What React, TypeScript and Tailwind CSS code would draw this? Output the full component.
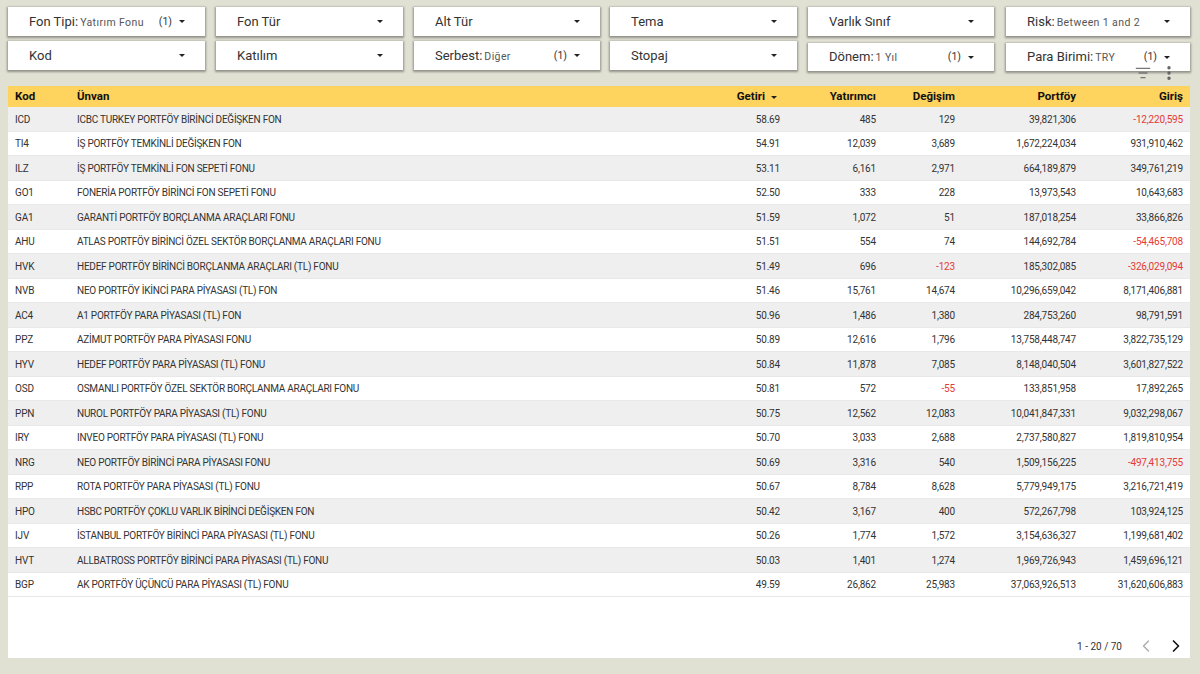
import { ListFilter, MoreVertical, ChevronLeft, ChevronRight } from 'lucide-react';

type Filter = { label: string; value?: string; count?: boolean; w: string; ml: string };

const rowOne: Filter[] = [
    { label: 'Fon Tipi', value: 'Yatırım Fonu', count: true, w: 'w-[197px]', ml: 'ml-0 h-[29px]' },
    { label: 'Fon Tür', w: 'w-[187px]', ml: 'ml-[11px] h-[29px]' },
    { label: 'Alt Tür', w: 'w-[186px]', ml: 'ml-[11px] h-[29px]' },
    { label: 'Tema', w: 'w-[187px]', ml: 'ml-[10px] h-[29px]' },
    { label: 'Varlık Sınıf', w: 'w-[186px]', ml: 'ml-[11px] h-[29px]' },
    { label: 'Risk', value: 'Between 1 and 2', w: 'w-[184px]', ml: 'ml-[12px] h-[29px]' },
];

const rowTwo: Filter[] = [
    { label: 'Kod', w: 'w-[197px]', ml: 'ml-0 h-[29px]' },
    { label: 'Katılım', w: 'w-[187px]', ml: 'ml-[11px] h-[29px]' },
    { label: 'Serbest', value: 'Diğer', count: true, w: 'w-[186px]', ml: 'ml-[11px] h-[29px]' },
    { label: 'Stopaj', w: 'w-[187px]', ml: 'ml-[10px] h-[29px]' },
    { label: 'Dönem', value: '1 Yıl', count: true, w: 'w-[186px]', ml: 'ml-[11px] mt-[2px] h-[28px]' },
    { label: 'Para Birimi', value: 'TRY', count: true, w: 'w-[184px]', ml: 'ml-[12px] mt-[2px] h-[28px]' },
];

const rows = [
    ['ICD', 'ICBC TURKEY PORTFÖY BİRİNCİ DEĞİŞKEN FON', '58.69', '485', '129', '39,821,306', '-12,220,595'],
    ['TI4', 'İŞ PORTFÖY TEMKİNLİ DEĞİŞKEN FON', '54.91', '12,039', '3,689', '1,672,224,034', '931,910,462'],
    ['ILZ', 'İŞ PORTFÖY TEMKİNLİ FON SEPETİ FONU', '53.11', '6,161', '2,971', '664,189,879', '349,761,219'],
    ['GO1', 'FONERİA PORTFÖY BİRİNCİ FON SEPETİ FONU', '52.50', '333', '228', '13,973,543', '10,643,683'],
    ['GA1', 'GARANTİ PORTFÖY BORÇLANMA ARAÇLARI FONU', '51.59', '1,072', '51', '187,018,254', '33,866,826'],
    ['AHU', 'ATLAS PORTFÖY BİRİNCİ ÖZEL SEKTÖR BORÇLANMA ARAÇLARI FONU', '51.51', '554', '74', '144,692,784', '-54,465,708'],
    ['HVK', 'HEDEF PORTFÖY BİRİNCİ BORÇLANMA ARAÇLARI (TL) FONU', '51.49', '696', '-123', '185,302,085', '-326,029,094'],
    ['NVB', 'NEO PORTFÖY İKİNCİ PARA PİYASASI (TL) FON', '51.46', '15,761', '14,674', '10,296,659,042', '8,171,406,881'],
    ['AC4', 'A1 PORTFÖY PARA PİYASASI (TL) FON', '50.96', '1,486', '1,380', '284,753,260', '98,791,591'],
    ['PPZ', 'AZİMUT PORTFÖY PARA PİYASASI FONU', '50.89', '12,616', '1,796', '13,758,448,747', '3,822,735,129'],
    ['HYV', 'HEDEF PORTFÖY PARA PİYASASI (TL) FONU', '50.84', '11,878', '7,085', '8,148,040,504', '3,601,827,522'],
    ['OSD', 'OSMANLI PORTFÖY ÖZEL SEKTÖR BORÇLANMA ARAÇLARI FONU', '50.81', '572', '-55', '133,851,958', '17,892,265'],
    ['PPN', 'NUROL PORTFÖY PARA PİYASASI (TL) FONU', '50.75', '12,562', '12,083', '10,041,847,331', '9,032,298,067'],
    ['IRY', 'INVEO PORTFÖY PARA PİYASASI (TL) FONU', '50.70', '3,033', '2,688', '2,737,580,827', '1,819,810,954'],
    ['NRG', 'NEO PORTFÖY BİRİNCİ PARA PİYASASI FONU', '50.69', '3,316', '540', '1,509,156,225', '-497,413,755'],
    ['RPP', 'ROTA PORTFÖY PARA PİYASASI (TL) FONU', '50.67', '8,784', '8,628', '5,779,949,175', '3,216,721,419'],
    ['HPO', 'HSBC PORTFÖY ÇOKLU VARLIK BİRİNCİ DEĞİŞKEN FON', '50.42', '3,167', '400', '572,267,798', '103,924,125'],
    ['IJV', 'İSTANBUL PORTFÖY BİRİNCİ PARA PİYASASI (TL) FONU', '50.26', '1,774', '1,572', '3,154,636,327', '1,199,681,402'],
    ['HVT', 'ALLBATROSS PORTFÖY BİRİNCİ PARA PİYASASI (TL) FONU', '50.03', '1,401', '1,274', '1,969,726,943', '1,459,696,121'],
    ['BGP', 'AK PORTFÖY ÜÇÜNCÜ PARA PİYASASI (TL) FONU', '49.59', '26,862', '25,983', '37,063,926,513', '31,620,606,883'],
];

const gridCols = 'grid grid-cols-[62px_623px_80px_96px_79px_121px_107px] pl-[7px]';

function Caret() {
    return <span className="h-0 w-0 border-x-[3px] border-t-[3px] border-x-transparent border-t-[#212121]" />;
}

function FilterBox({ f }: { f: Filter }) {
    return (
        <div className={`${f.w} ${f.ml} bg-white flex items-center pl-[21px] pr-[20px] shadow-[0_1px_2px_1px_rgba(0,0,0,0.35)] text-[#333]`}>
            <span className="text-[13px] whitespace-nowrap">{f.label}{f.value ? ':' : ''}</span>
            {f.value && <span className="text-[10.5px] ml-[2px] mt-[2px] text-[#555] tracking-[0.4px] whitespace-nowrap">{f.value}</span>}
            <span className="flex-1" />
            {f.count && <span className="text-[10.5px] mr-[7px]">(1)</span>}
            <Caret />
        </div>
    );
}

export default function App() {
    return (
        <div className="w-[1200px] h-[674px] bg-[#e0e0d3] overflow-hidden pt-[7px] pl-[8px] font-['Roboto',sans-serif]">
            {/* Filters */}
            <div className="flex">
                {rowOne.map((f) => <FilterBox key={f.label} f={f} />)}
            </div>
            <div className="flex mt-[5px] h-[31px] items-start">
                {rowTwo.map((f) => <FilterBox key={f.label} f={f} />)}
            </div>

            {/* Table */}
            <div className="relative mt-[14px] w-[1182px] h-[572px] bg-white flex flex-col">
                <div className="absolute right-[12px] -top-[22px] flex items-center gap-[9px] text-[#757575]">
                    <ListFilter size={16} strokeWidth={2} />
                    <MoreVertical size={18} strokeWidth={2.5} className="text-[#616161]" />
                </div>

                <div className={`${gridCols} h-[21px] pt-[1px] bg-[#fed35e] items-center text-[11.5px] font-bold text-[#111]`}>
                    <span>Kod</span>
                    <span>Ünvan</span>
                    <span className="flex items-center justify-end gap-[6px] pr-[3px]">Getiri <Caret /></span>
                    <span className="text-right">Yatırımcı</span>
                    <span className="text-right">Değişim</span>
                    <span className="text-right">Portföy</span>
                    <span className="text-right">Giriş</span>
                </div>

                {rows.map((r, i) => (
                    <div
                        key={r[0]}
                        className={`${gridCols} h-[24.5px] pt-[1px] items-center text-[10px] tracking-[-0.18px] text-[#333] border-b border-[#e8e8e8] ${i % 2 === 0 ? 'bg-[#efefef]' : 'bg-white'}`}
                    >
                        <span>{r[0]}</span>
                        <span className="whitespace-nowrap tracking-[-0.25px]">{r[1]}</span>
                        <span className="text-right">{r[2]}</span>
                        <span className="text-right">{r[3]}</span>
                        <span className={`text-right ${r[4].startsWith('-') ? 'text-[#e53935]' : ''}`}>{r[4]}</span>
                        <span className="text-right">{r[5]}</span>
                        <span className={`text-right ${r[6].startsWith('-') ? 'text-[#e53935]' : ''}`}>{r[6]}</span>
                    </div>
                ))}

                {/* Pagination */}
                <div className="flex-1 flex items-end justify-end pr-[4px] pb-[2px]">
                    <div className="flex items-center text-[10px] text-[#333]">
                        <span className="mr-[14px] mt-[1px]">1 - 20 / 70</span>
                        <ChevronLeft size={20} strokeWidth={1.5} className="text-[#aaa] mr-[10px]" />
                        <ChevronRight size={20} strokeWidth={2} className="text-[#111]" />
                    </div>
                </div>
            </div>
        </div>
    );
}
